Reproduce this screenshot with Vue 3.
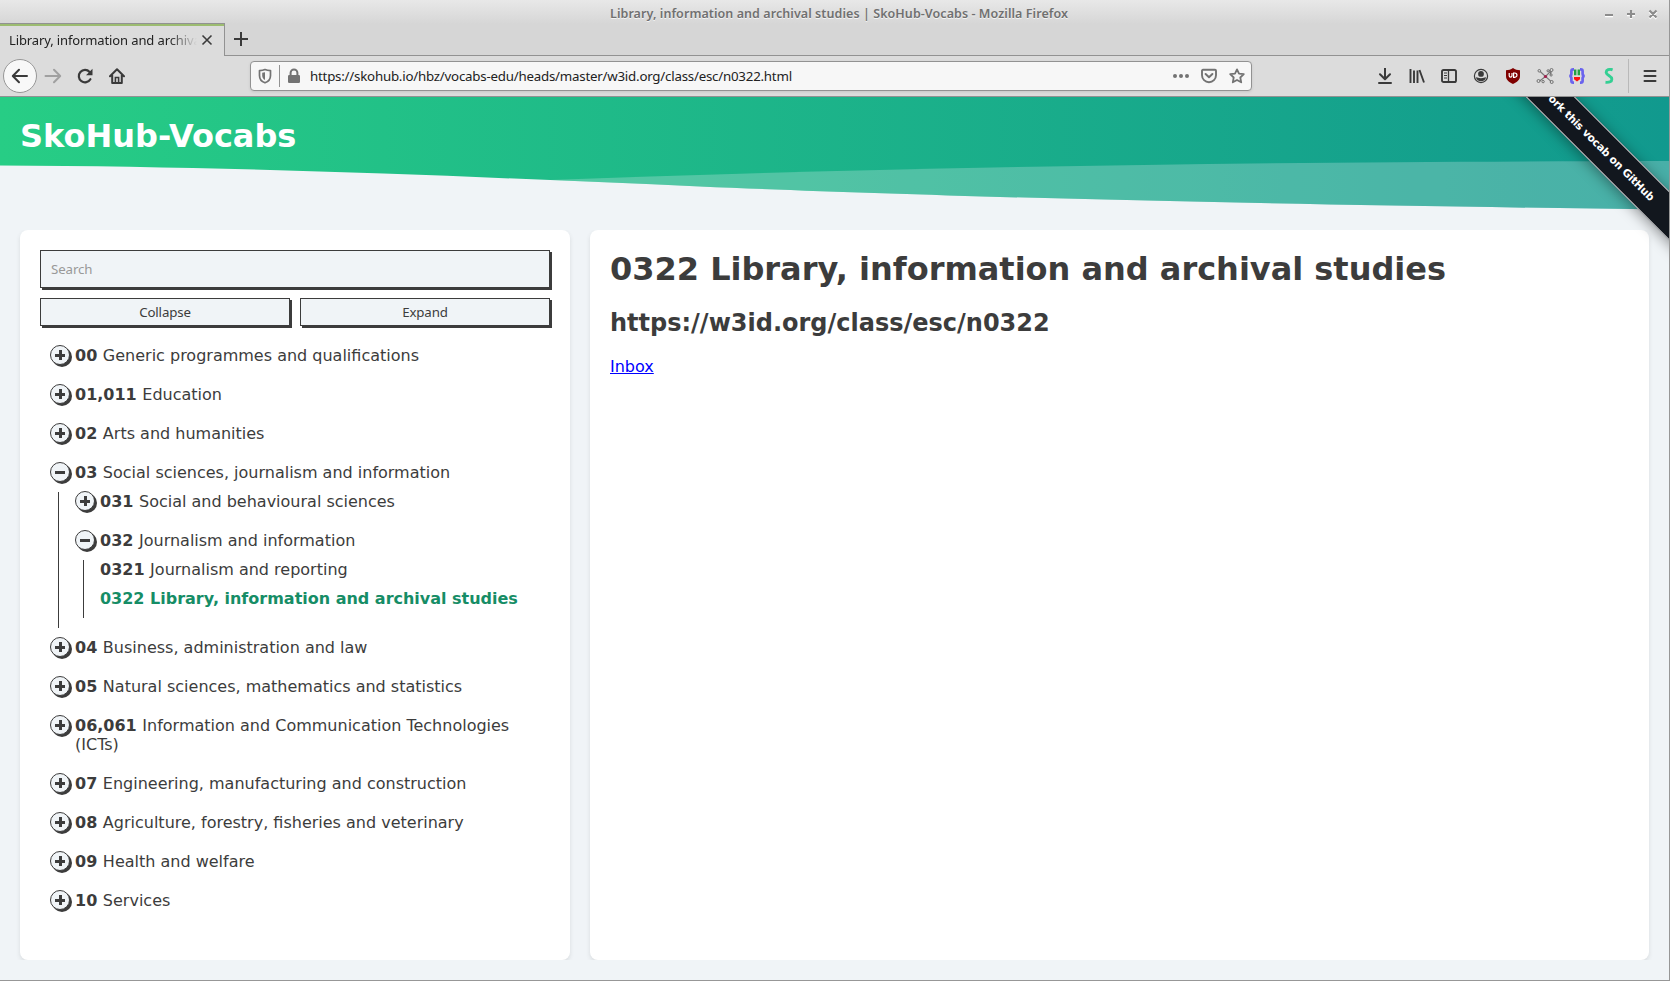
<script setup>
import { ref } from 'vue'

const query = ref('')

const rows = [
  { code: '00', label: 'Generic programmes and qualifications', branch: true },
  { code: '01,011', label: 'Education', branch: true },
  { code: '02', label: 'Arts and humanities', branch: true },
  {
    code: '03', label: 'Social sciences, journalism and information', branch: true,
    children: [
      { code: '031', label: 'Social and behavioural sciences', branch: true },
      {
        code: '032', label: 'Journalism and information', branch: true,
        children: [
          { code: '0321', label: 'Journalism and reporting' },
          { code: '0322', label: 'Library, information and archival studies', current: true },
        ],
      },
    ],
  },
  { code: '04', label: 'Business, administration and law', branch: true },
  { code: '05', label: 'Natural sciences, mathematics and statistics', branch: true },
  { code: '06,061', label: 'Information and Communication Technologies (ICTs)', branch: true },
  { code: '07', label: 'Engineering, manufacturing and construction', branch: true },
  { code: '08', label: 'Agriculture, forestry, fisheries and veterinary', branch: true },
  { code: '09', label: 'Health and welfare', branch: true },
  { code: '10', label: 'Services', branch: true },
]
</script>

<template>
  <div class="window">
    <header class="chrome">
      <div class="titlebar">
        <span class="wtitle">Library, information and archival studies | SkoHub-Vocabs - Mozilla Firefox</span>
        <svg class="wbuttons" width="60" height="14" viewBox="0 0 60 14">
          <g stroke="#fff" stroke-width="2.6" fill="none" transform="translate(0 1)">
            <path d="M4 8H12M26 7H34M30 3V11M48.500 3.500L55.500 10.500M55.500 3.500L48.500 10.500" />
          </g>
          <g stroke="#8c8c8c" stroke-width="2.2" fill="none">
            <path d="M4 8H12M26 7H34M30 3V11M48.500 3.500L55.500 10.500M55.500 3.500L48.500 10.500" />
          </g>
        </svg>
      </div>
      <div class="tabs">
        <div class="tab">
          <span class="tabtext">Library, information and archival studies</span>
          <svg width="12" height="12" viewBox="0 0 12 12"><path d="M1.5 1.5L10.5 10.5M10.5 1.5L1.5 10.5" stroke="#3c3c3c" stroke-width="1.6" /></svg>
        </div>
        <div class="newtab">
          <svg width="14" height="14" viewBox="0 0 14 14"><path d="M7 0V14M0 7H14" stroke="#3a3a3a" stroke-width="2" /></svg>
        </div>
      </div>
      <div class="toolbar">
        <div class="nav">
          <span class="back"><svg width="18" height="16" viewBox="0 0 18 16"><path d="M16 8H2.5M8 1.8L1.8 8L8 14.2" fill="none" stroke="#3a3a3a" stroke-width="2" stroke-linejoin="round" stroke-linecap="round" /></svg></span>
          <span class="cell"><svg width="18" height="16" viewBox="0 0 18 16"><path d="M1.5 8H16M10 1.8L16.2 8L10 14.2" fill="none" stroke="#a0a0a0" stroke-width="2" stroke-linejoin="round" stroke-linecap="round" /></svg></span>
          <span class="cell"><svg width="16" height="16" viewBox="0 0 16 16"><path d="M13.4 11.2A6.2 6.2 0 1 1 12.6 3.9" fill="none" stroke="#3a3a3a" stroke-width="2.2" stroke-linecap="round" /><path d="M15.5 .8V7.2H9Z" fill="#3a3a3a" /></svg></span>
          <span class="cell"><svg width="16" height="16" viewBox="0 0 16 16"><path d="M1 8.3L8 1.3L15 8.3M3.2 7V15H12.8V7" fill="none" stroke="#3a3a3a" stroke-width="2" stroke-linecap="round" stroke-linejoin="round" /><path d="M6.4 15V9.5H9.6V15" fill="none" stroke="#3a3a3a" stroke-width="1.6" /></svg></span>
        </div>
        <div class="urlbar">
          <svg class="shield" width="14" height="16" viewBox="0 0 14 16"><path d="M7 1.6C5.5 2.3 3.4 2.6 1.5 2.6V7.4C1.5 10.8 3.5 13.5 7 14.8C10.5 13.5 12.5 10.8 12.5 7.4V2.6C10.6 2.6 8.5 2.3 7 1.6Z" fill="none" stroke="#737373" stroke-width="1.7" stroke-linejoin="round" /><path d="M7 4.2V12C5 10.8 4.2 9.2 4.2 7.4V4.8Z" fill="#737373" /></svg>
          <i class="usep"></i>
          <svg class="lock" width="14" height="16" viewBox="0 0 14 16"><path d="M3.6 8V4.8A3.4 3.4 0 0 1 10.4 4.8V8" fill="none" stroke="#737373" stroke-width="2" /><rect x="1" y="7" width="12" height="8" rx="1.2" fill="#737373" /></svg>
          <span class="url">https://skohub.io/hbz/vocabs-edu/heads/master/w3id.org/class/esc/n0322.html</span>
          <svg class="dots" width="16" height="6" viewBox="0 0 16 6"><g fill="#737373"><circle cx="2" cy="3" r="2" /><circle cx="8" cy="3" r="2" /><circle cx="14" cy="3" r="2" /></g></svg>
          <svg class="pocket" width="16" height="16" viewBox="0 0 16 16"><path d="M2 1.8H14Q15 1.8 15 2.8V7.2A7 7 0 0 1 1 7.2V2.8Q1 1.8 2 1.8Z" fill="none" stroke="#737373" stroke-width="1.9" /><path d="M4.6 6L8 9.2L11.4 6" fill="none" stroke="#737373" stroke-width="2" stroke-linecap="round" stroke-linejoin="round" /></svg>
          <svg width="16" height="16" viewBox="0 0 16 16"><path d="M8 1.4L10 5.6L14.8 6.2L11.3 9.5L12.2 14.3L8 12L3.8 14.3L4.7 9.5L1.2 6.2L6 5.6Z" fill="none" stroke="#737373" stroke-width="1.8" stroke-linejoin="round" /></svg>
        </div>
        <div class="actions">
          <span class="cell"><svg width="16" height="16" viewBox="0 0 16 16"><path d="M8 0V11M3 6.2L8 11.2L13 6.2M2 15H14" fill="none" stroke="#3a3a3a" stroke-width="2" stroke-linecap="round" stroke-linejoin="round" /></svg></span>
          <span class="cell"><svg width="16" height="16" viewBox="0 0 16 16"><path d="M1.5 1V15M5 2.5V15M8.5 2.5V15M10.5 2L15 14.5" fill="none" stroke="#3a3a3a" stroke-width="1.9" /></svg></span>
          <span class="cell"><svg width="16" height="16" viewBox="0 0 16 16"><rect x="1" y="2" width="14" height="12" rx="1.6" fill="none" stroke="#3a3a3a" stroke-width="1.9" /><path d="M7.5 2V14" stroke="#3a3a3a" stroke-width="1.3" /><path d="M3 5H6M3 7.5H6M3 10H6" stroke="#3a3a3a" stroke-width="1.1" /></svg></span>
          <span class="cell"><svg width="16" height="16" viewBox="0 0 16 16"><circle cx="8" cy="8" r="6.6" fill="none" stroke="#3a3a3a" stroke-width="1.2" /><circle cx="8" cy="5.9" r="2.9" fill="#3a3a3a" /><path d="M3 9.2C4.6 9 5 10.2 8 10.2C11 10.2 11.4 9 13 9.2C12.8 11.8 10.5 13.2 8 13.2C5.5 13.2 3.2 11.8 3 9.2Z" fill="#3a3a3a" /></svg></span>
          <span class="cell"><svg width="16" height="16" viewBox="0 0 16 16"><path d="M8 0C6 1.6 3.5 2.2 1 2.2V8C1 12 4 14.2 8 16C12 14.2 15 12 15 8V2.2C12.5 2.2 10 1.6 8 0Z" fill="#800000" /><path d="M4.2 5V7.8A1.4 1.4 0 0 0 7 7.8V5M8.6 5V9.3H9.8A2.1 2.1 0 0 0 9.8 5Z" fill="none" stroke="#fff" stroke-width="1.2" /></svg></span>
          <span class="cell"><svg width="18" height="16" viewBox="0 0 18 16"><path d="M9.500 8.500L3.700 3M9.500 8.500L15 2.800M9.500 8.500L3 13.500M9.500 8.500L15.300 13.600M15.500 3L14.100 7M12 3L14.500 2.500" stroke="#777" stroke-width="1.1" /><g fill="#ddd" stroke="#666" stroke-width=".9"><circle cx="3.3" cy="2.8" r="1.3" /><circle cx="15.5" cy="2" r="1.5" /><circle cx="12.1" cy="2.8" r="1.1" /><circle cx="15.1" cy="7" r="1.1" /><circle cx="2.5" cy="13" r="1.5" /><circle cx="7.1" cy="13.600" r="1.2" /><circle cx="15.700" cy="14" r="1.5" /></g><circle cx="9.500" cy="8.500" r="1.6" fill="#a3204e" /></svg></span>
          <span class="cell"><svg width="16" height="16" viewBox="0 0 16 16"><path d="M5 1.4H4.2Q2.4 1.4 2.4 3V5.8Q2.4 8 .2 8Q2.4 8 2.4 10.2V13Q2.4 14.6 4.2 14.6H5M11 1.4H11.8Q13.6 1.4 13.6 3V5.8Q13.6 8 15.8 8Q13.6 8 13.6 10.2V13Q13.6 14.6 11.800 14.600H11" fill="none" stroke="#6a63ee" stroke-width="2.7" /><path d="M6.2 1.5V7.200M9.800 1.500V7.200" stroke="#22a045" stroke-width="2.4" /><path d="M5 9H11V11.2L8 13.6L5 11.2Z" fill="#fb1212" /></svg></span>
          <span class="cell"><svg width="16" height="16" viewBox="0 0 16 16"><path d="M11.600 1.800C8.400 .6 5 1.800 5.200 4.600C5.500 7.400 10.600 7.600 10.800 11C10.900 13.600 8.400 14.600 4.500 14.300" fill="none" stroke="#34cf93" stroke-width="2.9" /></svg></span>
          <i class="tsep"></i>
          <span class="cell menu"><svg width="14" height="14" viewBox="0 0 14 14"><path d="M1.5 2H12.5M1.5 7H12.5M1.5 12H12.5" stroke="#3a3a3a" stroke-width="2" stroke-linecap="round" /></svg></span>
        </div>
      </div>
    </header>

    <div class="page">
      <div class="banner">
        <svg class="wave" width="1669" height="114" viewBox="0 0 1669 114">
          <defs>
            <linearGradient id="brand" x1="0" x2="1669" y1="0" y2="0" gradientUnits="userSpaceOnUse">
              <stop offset="0" stop-color="#27cd85" />
              <stop offset="1" stop-color="#11998e" />
            </linearGradient>
            <clipPath id="shape"><path d="M0 0H1669V112.500C1200 107 920 98.500 700 89.500C480 80 250 69.500 0 68.500Z" /></clipPath>
          </defs>
          <g clip-path="url(#shape)">
            <rect width="1669" height="114" fill="url(#brand)" />
            <path d="M535 83.500C900 70 1250 64.500 1669 64V114H535Z" fill="#f0f4f7" fill-opacity=".25" />
          </g>
        </svg>
        <h1 class="brand">SkoHub-Vocabs</h1>
      </div>

      <main class="columns">
        <nav class="card side">
          <input v-model="query" class="search" type="text" placeholder="Search" />
          <div class="buttons">
            <button>Collapse</button>
            <button>Expand</button>
          </div>
          <ul class="tree">
            <li v-for="a in rows" :key="a.code" :class="{ branch: a.branch, open: a.children }">
              <span v-if="a.branch" class="knob"></span><b>{{ a.code }}</b> {{ a.label }}
              <ul v-if="a.children">
                <li v-for="b in a.children" :key="b.code" :class="{ branch: b.branch, open: b.children }">
                  <span v-if="b.branch" class="knob"></span><b>{{ b.code }}</b> {{ b.label }}
                  <ul v-if="b.children">
                    <li v-for="c in b.children" :key="c.code" :class="{ current: c.current }">
                      <b>{{ c.code }}</b> {{ c.label }}
                    </li>
                  </ul>
                </li>
              </ul>
            </li>
          </ul>
        </nav>
        <section class="card content">
          <h1>0322 Library, information and archival studies</h1>
          <h2>https://w3id.org/class/esc/n0322</h2>
          <a href="#">Inbox</a>
        </section>
      </main>

      <div class="ribbon"><span>Fork this vocab on GitHub</span></div>
    </div>
  </div>
</template>

<style>
body { overflow: hidden; }
</style>

<style scoped>
* { box-sizing: border-box; }
.window {
  width: 1670px; height: 981px; display: flex; flex-direction: column;
  border-right: 1px solid #979797; border-bottom: 1px solid #979797;
  font-family: "DejaVu Sans", sans-serif; color: #3c3c3c; background: #f0f4f7; overflow: hidden;
}
svg { display: block; flex: none; }
.chrome {
  height: 97px; flex: none; border-bottom: 1px solid #929292;
  background: linear-gradient(#e8e8e8 0, #d6d6d6 24px, #d6d6d6 100%);
  font-family: "Noto Sans", sans-serif;
}
.titlebar { height: 23px; display: flex; align-items: center; padding-top: 5px; }
.wtitle {
  margin-left: 610px; width: 470px; font-size: 12.5px; line-height: 18px; font-weight: 600; color: #707070;
  letter-spacing: .065px; text-shadow: 0 1px #f4f4f4; white-space: nowrap;
}
.wbuttons { margin-left: 521px; }
.tabs { height: 33px; display: flex; border-bottom: 1px solid #929292; }
.tab {
  width: 225px; height: 33px; margin-bottom: -1px; background: #dcdcdc; display: flex; align-items: center;
  border-top: 1px solid #929292; border-right: 1px solid #929292; box-shadow: inset 0 2px #9cbc70; padding: 0 0 0 9px;
}
.tabtext {
  width: 188px; margin-right: 4px; overflow: hidden; white-space: nowrap; font-size: 13px; line-height: 18px; letter-spacing: -.12px; color: #222;
  -webkit-mask-image: linear-gradient(90deg, #000 160px, transparent 188px); mask-image: linear-gradient(90deg, #000 160px, transparent 188px);
}
.newtab { padding: 9px 0 0 9px; }
.toolbar { height: 40px; background: #dcdcdc; display: flex; align-items: center; padding-left: 3px; }
.nav { display: flex; align-items: center; width: 247px; }
.back { width: 34px; height: 34px; border: 1px solid #979797; border-radius: 50%; background: #f8f8f8; display: flex; align-items: center; justify-content: center; }
.cell { width: 32px; height: 32px; display: flex; align-items: center; justify-content: center; }
.urlbar {
  width: 1002px; height: 30px; background: #f7f7f7; border: 1px solid #929292; border-radius: 4px;
  display: flex; align-items: center; box-shadow: 0 1px 3px rgba(0, 0, 0, .1); padding-right: 6px;
}
.shield { margin-left: 7px; }
.usep { width: 1px; height: 22px; background: #929292; margin: 0 7px 0 7px; }
.url { margin-left: 9px; font-size: 13.3px; letter-spacing: -.22px; color: #222; white-space: nowrap; flex: 1; }
.dots { margin-right: 12px; }
.pocket { margin-right: 12px; }
.actions { margin-left: 117px; display: flex; align-items: center; }
.tsep { width: 1px; height: 34px; background: #b9b9b9; margin: 0 5px 0 3px; }

.page { position: relative; flex: 1; overflow: hidden; }
.banner { height: 133px; position: relative; }
.wave { position: absolute; left: 0; top: 0; }
.brand { position: relative; margin: 0; padding: 20px 0 0 20px; font-size: 32px; line-height: 38px; color: #fff; }
.columns { display: flex; gap: 20px; padding: 0 20px; height: 730px; }
.card { background: #fff; border-radius: 8px; box-shadow: 0 2px 4px rgba(60, 60, 60, .13); padding: 20px; clip-path: inset(0 -8px 0 -8px); }
.side { width: 550px; flex: none; }
.content { flex: 1; }
.search {
  display: block; width: 510px; height: 38px; padding: 0 10px; margin: 0 0 10px; border: 1px solid #3c3c3c; border-radius: 0; outline: 0;
  background: #f0f4f7; box-shadow: 2px 2px #3c3c3c; font: 13.3px "Noto Sans", sans-serif; letter-spacing: -.1px; color: #3c3c3c;
}
.search::placeholder { color: #999; opacity: 1; }
.buttons { display: flex; gap: 10px; }
.buttons button {
  flex: 1; height: 28px; padding: 0; border: 1px solid #3c3c3c; border-radius: 0; background: #f0f4f7; box-shadow: 2px 2px #3c3c3c;
  font: 13.3px "Noto Sans", sans-serif; letter-spacing: -.15px; color: #3c3c3c;
}
ul { list-style: none; margin: 0; padding: 0; font-size: 16px; line-height: 19px; }
.tree { margin: 20px 0 0 35px; }
b { margin-right: .5px; }
li { position: relative; margin-bottom: 10px; }
li.branch { margin-bottom: 20px; }
li.open { margin-bottom: 10px; }
li ul { display: flow-root; margin: 10px 0 0 -17px; padding-left: 16px; border-left: 1px solid #3c3c3c; }
li ul > li.branch { margin-left: 25px; }
.current { color: #168d66; font-weight: bold; letter-spacing: -.01px; }
.current b { margin-right: 0; }
.knob {
  position: absolute; left: -25px; top: -1px; width: 20px; height: 20px; border: 1px solid #3c3c3c; border-radius: 50%;
  box-shadow: 2px 2px #3c3c3c;
  background:
    linear-gradient(#3c3c3c, #3c3c3c) center / 10px 3px no-repeat,
    linear-gradient(#3c3c3c, #3c3c3c) center / 3px 10px no-repeat, #f0f4f7;
}
.open > .knob { background: linear-gradient(#3c3c3c, #3c3c3c) center / 10px 3px no-repeat, #f0f4f7; }
.content h1 { margin: 0; font-size: 32px; line-height: 38px; letter-spacing: -.015px; }
.content h2 { margin: 21px 0 20px; font-size: 24px; line-height: 28px; }
.content a { font-size: 16px; line-height: 19px; color: #00f; }

.ribbon { position: absolute; right: 0; top: 0; width: 180px; height: 180px; overflow: hidden; pointer-events: none; }
.ribbon span {
  position: absolute; left: 110px; top: 47.5px; width: 320px; height: 35px; margin: -17px 0 0 -160px;
  transform: rotate(45deg); display: flex; align-items: center; justify-content: center;
  background: #12171e; border: 1px solid rgba(255, 255, 255, .75); box-shadow: 0 2px 14px rgba(0, 0, 0, .4);
  color: #fff; font-size: 10.7px; letter-spacing: -.2px; font-weight: bold; white-space: nowrap;
}
</style>
